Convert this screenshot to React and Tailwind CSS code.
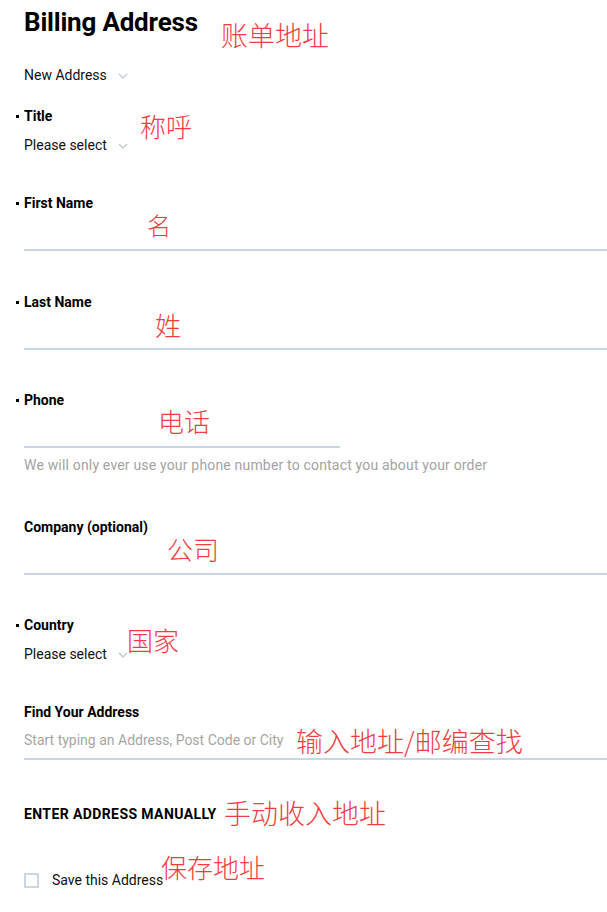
import React from "react";

const Chevron = () => (
  <svg width="10" height="6" viewBox="0 0 10 6" className="ml-[11px] mt-[2px]">
    <path d="M1 1l4 4 4-4" fill="none" stroke="#b9c8da" strokeWidth="1.3" />
  </svg>
);

const Label = ({ children, required, className = "" }) => (
  <div className={`flex items-center h-5 text-[14px] font-bold text-black ${required ? "-ml-[8px]" : ""} ${className}`}>
    {required && <span className="inline-block w-[3px] h-[3px] bg-black mr-[5px]" />}
    {children}
  </div>
);

const Select = ({ value, className = "" }) => (
  <div className={`flex items-center h-5 text-[14px] text-[#111] ${className}`}>
    {value}
    <Chevron />
  </div>
);

const Input = ({ width = "w-full", placeholder }) => (
  <div className={`h-[38px] border-b-2 border-[#c8d6e5] flex items-center pt-[1px] ${width}`}>
    {placeholder && <span className="text-[14px] text-[#a6a6a6]">{placeholder}</span>}
  </div>
);

const Note = ({ children, className }) => (
  <span className={`absolute leading-none font-light text-[#f23c3f] whitespace-nowrap ${className}`}>
    {children}
  </span>
);

export default function App() {
  return (
    <div
      className="relative w-[607px] h-[912px] bg-white pl-6 overflow-hidden"
      style={{ fontFamily: "Roboto, 'Liberation Sans', sans-serif" }}
    >
      <div className="flex flex-col">
        <h1 className="mt-1 h-9 leading-9 text-[26px] font-bold text-black tracking-[-0.2px]">Billing Address</h1>
        <Select value="New Address" className="mt-[25px]" />

        <Label required className="mt-[21px]">Title</Label>
        <Select value="Please select" className="mt-[9px]" />

        <Label required className="mt-[38px]">First Name</Label>
        <Input />

        <Label required className="mt-[41px]">Last Name</Label>
        <Input />

        <Label required className="mt-[40px]">Phone</Label>
        <Input width="w-[316px]" />
        <div className="mt-[7px] h-5 flex items-center text-[14px] text-[#a3a3a3] tracking-[0.18px]">
          We will only ever use your phone number to contact you about your order
        </div>

        <Label className="mt-[42px]">Company (optional)</Label>
        <Input />

        <Label required className="mt-[40px]">Country</Label>
        <Select value="Please select" className="mt-[9px]" />

        <Label className="mt-[38px]">Find Your Address</Label>
        <Input placeholder="Start typing an Address, Post Code or City" />

        <Label className="mt-[44px] tracking-[0.4px]">ENTER ADDRESS MANUALLY</Label>

        <div className="mt-[46px] h-5 flex items-center">
          <span className="w-[15px] h-[15px] border-2 border-[#c8d6e5] mr-[13px]" />
          <span className="text-[14px] text-[#111]">Save this Address</span>
        </div>
      </div>

      <div style={{ fontFamily: "'Noto Sans CJK SC', sans-serif" }}>
        <Note className="left-[221px] top-[21px] text-[27px]">账单地址</Note>
        <Note className="left-[140px] top-[113px] text-[26px]">称呼</Note>
        <Note className="left-[147px] top-[213px] text-[24px]">名</Note>
        <Note className="left-[155px] top-[312px] text-[26px]">姓</Note>
        <Note className="left-[158px] top-[408px] text-[26px]">电话</Note>
        <Note className="left-[167px] top-[536px] text-[26px]">公司</Note>
        <Note className="left-[127px] top-[627px] text-[26px]">国家</Note>
        <Note className="left-[296px] top-[727px] text-[27px]">输入地址/邮编查找</Note>
        <Note className="left-[224px] top-[799px] text-[27px]">手动收入地址</Note>
        <Note className="left-[161px] top-[854px] text-[26px]">保存地址</Note>
      </div>
    </div>
  );
}
